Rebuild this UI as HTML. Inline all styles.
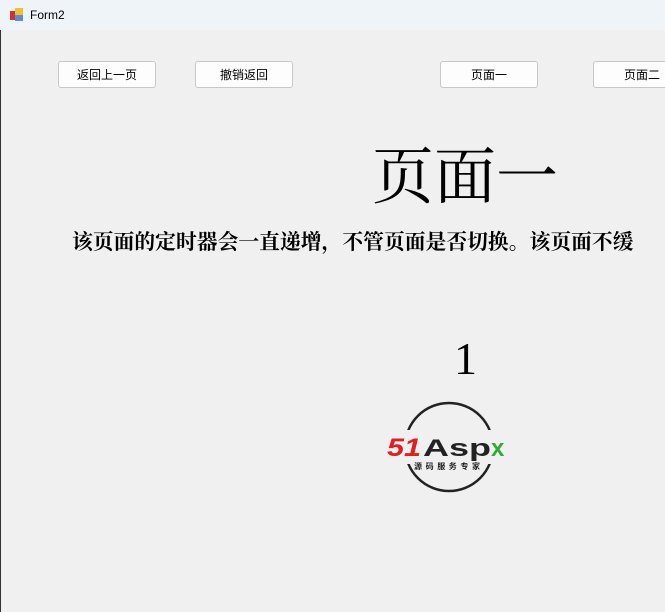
<!DOCTYPE html>
<html><head><meta charset="utf-8"><style>
body{margin:0;width:665px;height:612px;background:#f0f0f0;position:relative;overflow:hidden;font-family:"Liberation Sans","Noto Sans CJK SC",sans-serif}
.tb{position:absolute;left:0;top:0;width:665px;height:30px;background:#eff4f9;}
.tb span{position:absolute;left:30px;top:8px;font-size:12px;color:#000}
.btn{position:absolute;top:61px;height:27px;width:96px;background:#fdfdfd;border:1px solid #c8c8c8;border-radius:3px;font-size:12px;text-align:center;line-height:26px;box-sizing:border-box}
.s{font-family:"Liberation Serif","Noto Serif CJK SC",serif;position:absolute;white-space:nowrap}
</style></head><body>
<div class="tb"><svg style="position:absolute;left:10px;top:8px" width="14" height="14"><rect x="0" y="3" width="6" height="9" fill="#c33"/><rect x="5" y="0" width="8" height="7" fill="#f0c030"/><rect x="5" y="7" width="8" height="6" fill="#5b8cd8"/></svg><span>Form2</span></div>
<div style="position:absolute;left:0;top:30px;width:1px;height:582px;background:#333"></div>
<div class="btn" style="left:58px;width:98px">返回上一页</div>
<div class="btn" style="left:195px;width:98px">撤销返回</div>
<div class="btn" style="left:440px;width:98px">页面一</div>
<div class="btn" style="left:593px;width:98px">页面二</div>
<div class="s" style="left:372px;top:138px;font-size:62px;line-height:80px">页面一</div>
<div class="s" style="left:72px;top:229px;font-size:20.8px;font-weight:bold;line-height:28px">该页面的定时器会一直递增，不管页面是否切换。该页面不缓</div>
<div class="s" style="left:454px;top:333px;font-size:46px;line-height:52px">1</div>
<svg style="position:absolute;left:385px;top:396px" width="130" height="100">
<circle cx="64" cy="51" r="44" fill="none" stroke="#222" stroke-width="2.5"/>
<rect x="0" y="34" width="130" height="34" fill="#f0f0f0"/>
<text x="2" y="60" font-family="Liberation Sans" font-weight="bold" font-style="italic" font-size="25" fill="#e02020" textLength="34" lengthAdjust="spacingAndGlyphs">51</text>
<text x="38" y="60" font-family="Liberation Sans" font-weight="bold" font-size="24" fill="#222" textLength="68" lengthAdjust="spacingAndGlyphs">Asp</text>
<text x="106" y="60" font-family="Liberation Sans" font-weight="bold" font-size="24" fill="#3a3">x</text>
<text x="29" y="73" font-family="Noto Sans CJK SC" font-size="8" font-weight="bold" fill="#222" textLength="66">源码服务专家</text>
</svg>
</body></html>
